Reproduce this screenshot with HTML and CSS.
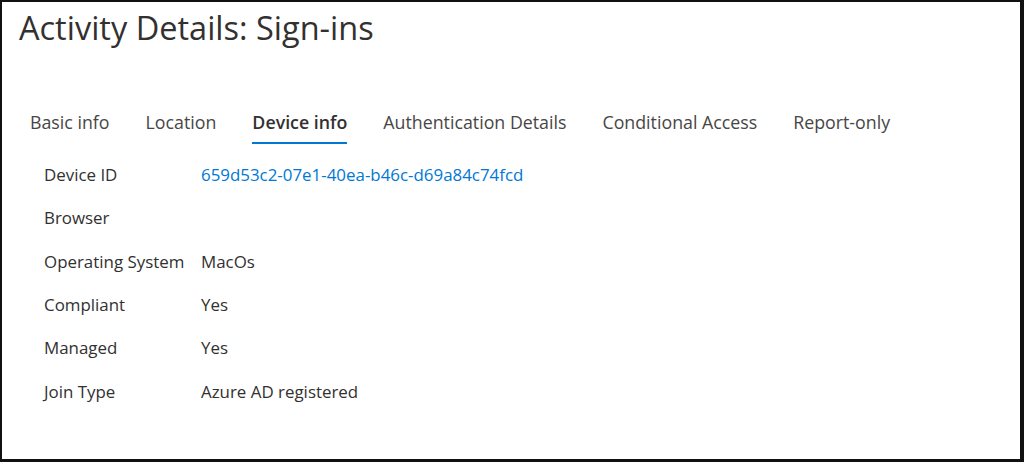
FILE: index.html
```html
<!DOCTYPE html>
<html>

<head>
    <meta charset="UTF-8">
    <title>Activity Details: Sign-ins</title>
    <link rel="stylesheet" href="styles.css">
</head>

<body>

    <div id="panel">
        <h1 id="title">Activity Details: Sign-ins</h1>

        <ul id="tabs">
            <li>Basic info</li>
            <li>Location</li>
            <li class="active">Device info</li>
            <li>Authentication Details</li>
            <li>Conditional Access</li>
            <li>Report-only</li>
        </ul>

        <dl id="details">
            <div class="row">
                <dt>Device ID</dt>
                <dd><a href="#">659d53c2-07e1-40ea-b46c-d69a84c74fcd</a></dd>
            </div>
            <div class="row">
                <dt>Browser</dt>
                <dd></dd>
            </div>
            <div class="row">
                <dt>Operating System</dt>
                <dd>MacOs</dd>
            </div>
            <div class="row">
                <dt>Compliant</dt>
                <dd>Yes</dd>
            </div>
            <div class="row">
                <dt>Managed</dt>
                <dd>Yes</dd>
            </div>
            <div class="row">
                <dt>Join Type</dt>
                <dd>Azure AD registered</dd>
            </div>
        </dl>
    </div>

</body>

</html>
```

FILE: styles.css
```css
* {
    margin: 0;
    padding: 0;
    box-sizing: border-box;
}

body {
    font-family: "Open Sans", "Noto Sans", sans-serif;
    color: #323130;
    background: #fff;
}

#panel {
    height: 462px;
    border-style: solid;
    border-color: #111;
    border-width: 2px 4px 3px 2px;
}

#title {
    font-size: 32.5px;
    font-weight: 500;
    line-height: 40px;
    padding: 6px 0 0 17px;
    height: 98px;
}

#tabs {
    display: flex;
    list-style: none;
    padding-left: 28px;
    gap: 36px;
}

#tabs>li {
    font-size: 17.8px;
    line-height: 24px;
    color: #484644;
    padding: 10px 0 8px;
    border-bottom: 2px solid transparent;
}

#tabs>li.active {
    color: #323130;
    font-weight: 600;
    border-bottom-color: #0078d4;
}

#details {
    padding: 9px 0 0 42px;
}

.row {
    display: flex;
    height: 43.3px;
    align-items: center;
    font-size: 16.9px;
}

.row>dt {
    width: 157px;
}

.row>dd a {
    color: #0078d4;
    text-decoration: none;
}
```
